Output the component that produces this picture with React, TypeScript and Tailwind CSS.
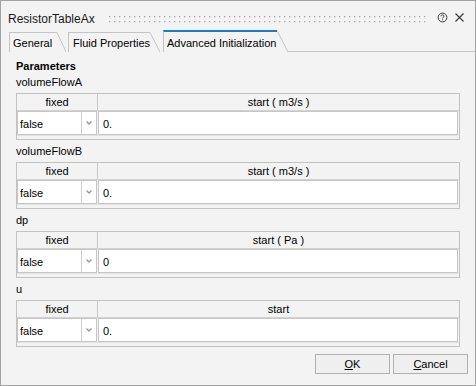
import React from 'react';

type Param = { name: string; unit: string; value: string };

const params: Param[] = [
  { name: 'volumeFlowA', unit: '( m3/s )', value: '0.' },
  { name: 'volumeFlowB', unit: '( m3/s )', value: '0.' },
  { name: 'dp', unit: '( Pa )', value: '0' },
  { name: 'u', unit: '', value: '0.' },
];

function Slant({ w, h }: { w: number; h: number }) {
  return (
    <svg width={w} height={h} className="shrink-0 block">
      <line x1={0} y1={0.5} x2={w} y2={h} stroke="#c4c4c4" strokeWidth={1} />
    </svg>
  );
}

function ParamTable({ p }: { p: Param }) {
  return (
    <div className="w-[444px] border border-[#c2c2c2] bg-[#f3f3f3]">
      <div className="flex h-[17px] border-b border-[#d2d2d2]">
        <div className="w-[81px] border-r border-[#c8c8c8] flex items-center justify-center leading-[14px]">
          fixed
        </div>
        <div className="flex-1 flex items-center justify-center leading-[14px]">
          start{p.unit ? ` ${p.unit}` : ''}
        </div>
      </div>
      <div className="flex h-[24px] gap-[1px] pr-[1px]">
        <div className="w-[80px] flex bg-white border border-[#c6c6c6]">
          <div className="w-[64px] border-r border-[#d0d0d0] flex items-center pl-[2px] pt-[1px] leading-[14px]">
            false
          </div>
          <div className="flex-1 flex items-center justify-center">
            <svg width="6" height="4" className="block">
              <polyline points="0.5,0.5 3,3 5.5,0.5" fill="none" stroke="#9a9a9a" strokeWidth="1.4" />
            </svg>
          </div>
        </div>
        <div className="flex-1 bg-white border border-[#c6c6c6] flex items-center pl-[4px] pt-[1px] leading-[14px]">
          {p.value}
        </div>
      </div>
      <div className="h-[4px] border-t border-[#e2e2e2]" />
    </div>
  );
}

export default function App() {
  return (
    <div className="w-[476px] h-[386px] bg-[#f3f3f3] border border-[#a3a3a3] flex flex-col font-['Liberation_Sans',Arial,sans-serif] text-[11px] text-black overflow-hidden">
      {/* title bar */}
      <div className="h-[29px] flex items-start shrink-0">
        <span className="ml-[7px] mt-[11px] text-[12px] leading-[14px] text-[#1a1a1a] whitespace-nowrap">ResistorTableAx</span>
        <svg width="317" height="7" className="ml-[14px] mt-[15px] block">
          <defs>
            <pattern id="grip" width="5" height="5" patternUnits="userSpaceOnUse">
              <rect x="0" y="0" width="1.3" height="1.3" fill="#a4a4a4" />
            </pattern>
          </defs>
          <rect width="317" height="7" fill="url(#grip)" />
        </svg>
        <svg width="11" height="11" viewBox="0 0 11 11" className="ml-[11px] mt-[11px] block">
          <circle cx="5.5" cy="5.5" r="4.4" fill="none" stroke="#3a3a3a" strokeWidth="1" />
          <path d="M4 4.3 C4 3.3 4.7 2.9 5.5 2.9 C6.3 2.9 7 3.4 7 4.2 C7 5.2 5.6 5.3 5.6 6.4" fill="none" stroke="#3a3a3a" strokeWidth="1" />
          <rect x="5.1" y="7.3" width="1" height="1" fill="#3a3a3a" />
        </svg>
        <svg width="11" height="11" viewBox="0 0 11 11" className="ml-[6px] mt-[11px] block">
          <path d="M1.5 1.5 L9.5 9.5 M9.5 1.5 L1.5 9.5" stroke="#3a3a3a" strokeWidth="1.1" />
        </svg>
      </div>

      {/* tabs */}
      <div className="h-[22px] flex items-end pl-[8px] shrink-0 whitespace-nowrap">
        <div className="h-[20px] w-[48px] shrink-0 border-l border-t border-[#c4c4c4] pl-[3px] flex items-center leading-[14px]">
          General
        </div>
        <Slant w={9} h={20} />
        <div className="ml-[2px] h-[20px] w-[82px] shrink-0 border-l border-t border-[#c4c4c4] pl-[4px] flex items-center leading-[14px]">
          Fluid Properties
        </div>
        <Slant w={10} h={20} />
        <div className="ml-[3px] h-[22px] w-[114px] shrink-0 border-l border-[#c4c4c4] border-t-2 border-t-[#1f7db6] pl-[3px] pt-[1px] flex items-center leading-[14px]">
          Advanced Initialization
        </div>
        <Slant w={11} h={22} />
        <div className="flex-1 h-full border-b border-[#c4c4c4]" />
      </div>

      {/* content */}
      <div className="flex-1 flex flex-col pl-[15px] pr-[7px] pt-[7px]">
        <div className="font-bold leading-[14px]">Parameters</div>
        {params.map((p, i) => (
          <div key={p.name} className="flex flex-col">
            <div className={`${i === 0 ? 'mt-[2px]' : 'mt-[4px]'} leading-[14px]`}>{p.name}</div>
            <div className="mt-[4px]">
              <ParamTable p={p} />
            </div>
          </div>
        ))}
        <div className="mt-[7px] flex justify-end gap-[3px]">
          <button className="w-[75px] h-[20px] border border-[#b0b0b0] bg-[#efefef] leading-[14px] flex items-center justify-center">
            <span><span className="underline">O</span>K</span>
          </button>
          <button className="w-[75px] h-[20px] border border-[#b0b0b0] bg-[#efefef] leading-[14px] flex items-center justify-center">
            <span><span className="underline">C</span>ancel</span>
          </button>
        </div>
      </div>
    </div>
  );
}
